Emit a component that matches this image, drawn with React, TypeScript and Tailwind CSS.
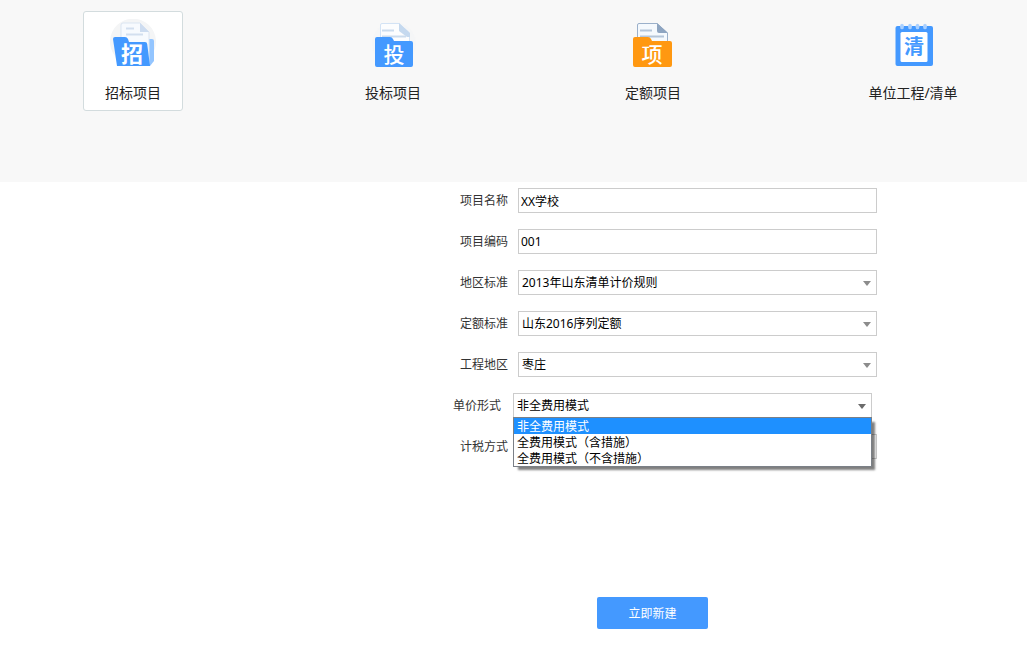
import React, { useState } from 'react';

const glyph = {
  fontFamily: '"Noto Sans CJK SC", sans-serif',
  textAnchor: 'middle' as const,
};

function BidIcon() {
  return (
    <svg viewBox="0 0 50 50" className="w-[50px] h-[50px]" aria-hidden="true">
      <path d="M7 37A23 23 0 1 1 43 37L40 47H10Z" fill="#f4f5f6" />
      <path d="M39 20H44Q46 20 46 22V42L42 47H38Z" fill="#93c5ff" />
      <path d="M15 4H32L41 13V45H13V6Q13 4 15 4Z" fill="#f7fafe" stroke="#dbe5f2" strokeWidth="1" />
      <path d="M32 4L41 13H32Z" fill="#cddcf0" />
      <path d="M18 9.5H26M18 15.5H35" stroke="#d3dfef" strokeWidth="2" />
      <path d="M7 18H17Q19 18 20 20L21 23H37Q39 23 39.2 25L42 47H9L5 20Q5 18 7 18Z" fill="#4499ff" />
      <text x="24" y="43" fontSize="22" fontWeight="700" fill="#fff" {...glyph}>招</text>
    </svg>
  );
}

function TenderIcon() {
  return (
    <svg viewBox="0 0 50 50" className="w-[50px] h-[50px]" aria-hidden="true">
      <circle cx="26" cy="25" r="22" fill="#f5f6f7" />
      <path d="M14 4.5H31L41.5 14V30H12.5V6Q12.5 4.5 14 4.5Z" fill="#fcfdfe" stroke="#d3e3f5" strokeWidth="1" />
      <path d="M31 4L42 14V18H39L31 12Z" fill="#c5d9ef" />
      <path d="M14 11.5H26M14 17.5H38" stroke="#cbdced" strokeWidth="2" />
      <path d="M9 18H22Q24 18 25 20L26 22H43Q45 22 45 24V46Q45 48 43 48H9Q7 48 7 46V20Q7 18 9 18Z" fill="#4499ff" />
      <text x="26" y="42.5" fontSize="21" fontWeight="500" fill="#fff" {...glyph}>投</text>
    </svg>
  );
}

function QuotaIcon() {
  return (
    <svg viewBox="0 0 50 50" className="w-[50px] h-[50px]" aria-hidden="true">
      <path d="M11 4.5H29L39.5 14V30H9.5V6Q9.5 4.5 11 4.5Z" fill="#f5f9fd" stroke="#9bb0ca" strokeWidth="1" />
      <path d="M29 4L40 14H31Q29 14 29 12Z" fill="#8ea5c1" />
      <path d="M12 11.5H24M12 17.5H36" stroke="#b4c5d9" strokeWidth="2" />
      <path d="M7 18H20Q22 18 23 20L24 22H42Q44 22 44 24V46Q44 48 42 48H7Q5 48 5 46V20Q5 18 7 18Z" fill="#ff9811" />
      <text x="24" y="42.5" fontSize="21" fontWeight="500" fill="#fff" {...glyph}>项</text>
    </svg>
  );
}

function ListIcon() {
  return (
    <svg viewBox="0 0 50 50" className="w-[50px] h-[50px]" aria-hidden="true">
      <rect x="7.5" y="7" width="37.5" height="40" rx="2" fill="#4499ff" />
      <rect x="12.5" y="13" width="27" height="30" rx="1.5" fill="#fff" />
      {[14, 22, 29.5, 37].map((x) => (
        <ellipse key={x} cx={x} cy="7.5" rx="2" ry="2.7" fill="#a9d0ff" />
      ))}
      <text x="26" y="35" fontSize="20" fontWeight="700" fill="#4499ff" {...glyph}>清</text>
    </svg>
  );
}

const tabs = [
  { label: '招标项目', Icon: BidIcon },
  { label: '投标项目', Icon: TenderIcon },
  { label: '定额项目', Icon: QuotaIcon },
  { label: '单位工程/清单', Icon: ListIcon },
];

const priceModes = ['非全费用模式', '全费用模式（含措施）', '全费用模式（不含措施）'];

function Arrow({ className }: { className: string }) {
  return (
    <svg viewBox="0 0 8 5" className={`absolute right-1.5 top-[11px] w-2 h-[5px] pointer-events-none ${className}`} aria-hidden="true">
      <path d="M0 0H8L4 5Z" fill="currentColor" />
    </svg>
  );
}

function TextRow({ id, label, value }: { id: string; label: string; value: string }) {
  return (
    <div className="flex items-center justify-end gap-2.5">
      <label htmlFor={id} className="text-[#333]">{label}</label>
      <input id={id} type="text" defaultValue={value} className="w-[359px] h-[25px] px-0.5 border border-[#ccc] bg-white outline-none" />
    </div>
  );
}

function SelectRow({ id, label, options }: { id: string; label: string; options: string[] }) {
  return (
    <div className="flex items-center justify-end gap-2.5">
      <label htmlFor={id} className="text-[#333]">{label}</label>
      <div className="relative w-[359px]">
        <select id={id} className="block w-full h-[25px] pl-[3px] pr-5 border border-[#ccc] bg-white appearance-none outline-none">
          {options.map((option) => (
            <option key={option}>{option}</option>
          ))}
        </select>
        <Arrow className="text-[#8c8c8c]" />
      </div>
    </div>
  );
}

function PriceModeRow() {
  const [mode, setMode] = useState(priceModes[0]);
  const [open, setOpen] = useState(true);

  return (
    <div className="flex items-center justify-end gap-3 mr-[5px]">
      <label htmlFor="mode" className="text-[#333]">单价形式</label>
      <div className="relative w-[359px]">
        <select
          id="mode"
          value={mode}
          onChange={(e) => setMode(e.target.value)}
          onMouseDown={(e) => {
            e.preventDefault();
            setOpen(!open);
          }}
          className="block w-full h-[25px] pl-[3px] pr-5 border border-[#ccc] bg-white appearance-none outline-none"
        >
          {priceModes.map((item) => (
            <option key={item}>{item}</option>
          ))}
        </select>
        <Arrow className="text-[#6b6b6b]" />
        {open && (
          <ul role="listbox" aria-label="单价形式" className="absolute z-10 left-0 top-6 w-full border border-[#7b8087] bg-white leading-[18px] shadow-[4px_4px_2px_-1px_rgba(0,0,0,0.5)]">
            {priceModes.map((item) => (
              <li
                key={item}
                role="option"
                aria-selected={item === mode}
                onClick={() => {
                  setMode(item);
                  setOpen(false);
                }}
                className={`h-4 pl-[3px] cursor-default ${item === mode ? 'bg-[#1e90ff] text-white' : 'text-black'}`}
              >
                {item}
              </li>
            ))}
          </ul>
        )}
      </div>
    </div>
  );
}

export default function App() {
  const [active, setActive] = useState(0);

  return (
    <div className="min-h-screen bg-white text-black text-xs font-['Noto_Sans','Noto_Sans_CJK_SC',sans-serif]">
      <nav className="flex items-start justify-between h-[182px] pt-[11px] pl-[83px] pr-16 bg-[#f8f8f8]">
        {tabs.map(({ label, Icon }, index) => (
          <button
            key={label}
            type="button"
            onClick={() => setActive(index)}
            className={`flex flex-col items-center w-[100px] h-[100px] pt-[7px] border rounded-[3px] ${active === index ? 'bg-white border-[#d3dcde]' : 'border-transparent'}`}
          >
            <Icon />
            <span className="mt-3.5 text-sm leading-5 whitespace-nowrap text-[#222]">{label}</span>
          </button>
        ))}
      </nav>

      <form onSubmit={(e) => e.preventDefault()} className="w-[449px] ml-auto mr-[150px] pt-1.5">
        <div className="flex flex-col gap-4">
          <TextRow id="name" label="项目名称" value="XX学校" />
          <TextRow id="code" label="项目编码" value="001" />
          <SelectRow id="rule" label="地区标准" options={['2013年山东清单计价规则']} />
          <SelectRow id="quota" label="定额标准" options={['山东2016序列定额']} />
          <SelectRow id="area" label="工程地区" options={['枣庄']} />
          <PriceModeRow />
          <SelectRow id="tax" label="计税方式" options={['']} />
        </div>
        <button type="submit" className="block w-[111px] h-8 mx-auto mt-[138px] pt-0.5 rounded-xs bg-[#4499ff] text-white">
          立即新建
        </button>
      </form>
    </div>
  );
}
